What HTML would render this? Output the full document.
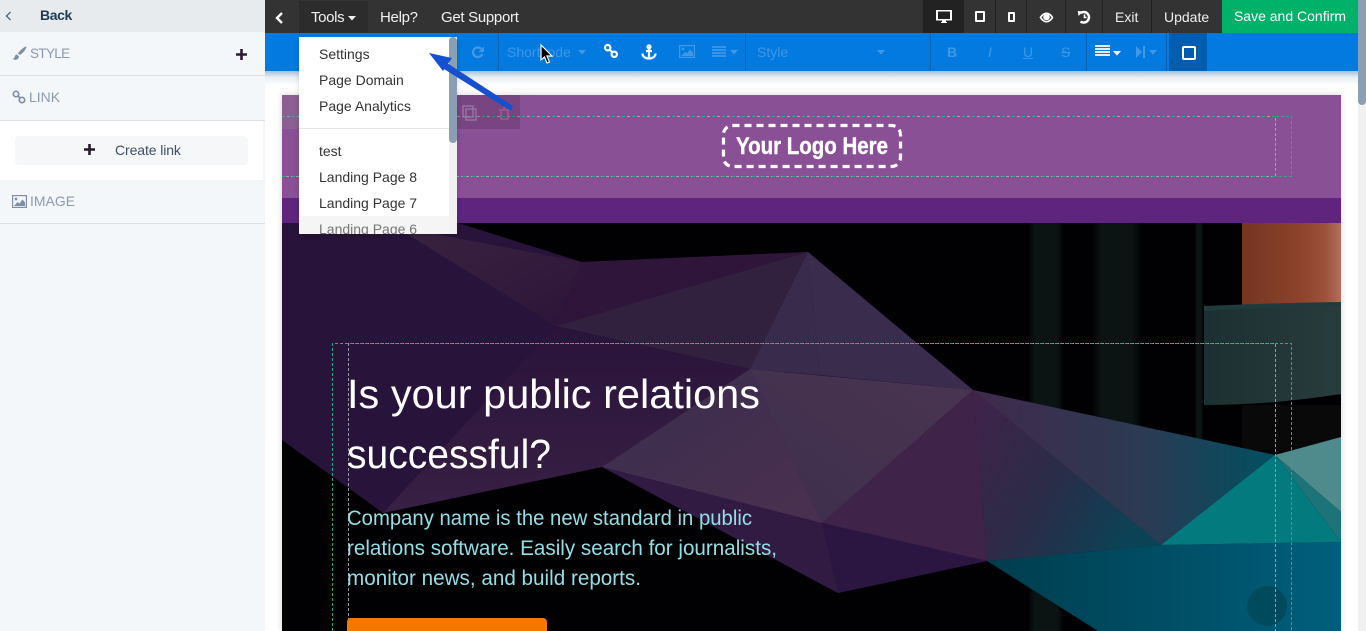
<!DOCTYPE html>
<html lang="en">
<head>
<meta charset="utf-8">
<title>Page Editor</title>
<style>
html,body{margin:0;padding:0;width:1366px;height:631px;overflow:hidden;background:#fff;font-family:"Liberation Sans",sans-serif}
.a{position:absolute;white-space:nowrap}
svg{position:absolute;overflow:visible}
.nav{color:#f0f0f0;font-size:15px;top:8px;line-height:18px}
.dd{color:#333;font-size:14px;left:20px;line-height:18px}
.sec{color:#8a9bb0;font-size:14px;line-height:18px}
.off{color:#3f97e4;font-size:14px;line-height:18px}
.div{position:absolute;top:33px;height:38px;width:1px;background:#0361b3}
.nd{position:absolute;top:0;height:33px;width:1px;background:#222}
</style>
</head>
<body>

<!-- Canvas -->
<div class="a" style="left:265px;top:71px;width:1093px;height:560px;background:#fff"></div>
<div class="a" style="left:265px;top:71px;width:1093px;height:14px;background:linear-gradient(#a9bfd6,#e8eef4 45%,#fff)"></div>
<div class="a" style="left:1358px;top:0;width:8px;height:631px;background:#f1f1f1"></div>
<div class="a" style="left:1358px;top:0;width:8px;height:105px;background:#8a9fb3;border-radius:0 0 4px 4px;z-index:30"></div>
<div class="a" style="left:282px;top:95px;width:1059px;height:536px;box-shadow:0 0 6px rgba(0,0,0,.18)"></div>

<svg style="left:0;top:0" width="1366" height="631" viewBox="0 0 1366 631">
  <defs>
    <linearGradient id="g1" x1="0" x2="1" y1="0" y2="0"><stop offset="0" stop-color="#402a4c"/><stop offset=".55" stop-color="#2c3a52"/><stop offset="1" stop-color="#014f62"/></linearGradient>
    <linearGradient id="g2" x1="0" x2="1" y1="0" y2=".5"><stop offset="0" stop-color="#41234a"/><stop offset=".55" stop-color="#2a2c48"/><stop offset="1" stop-color="#0c4255"/></linearGradient>
    <linearGradient id="g3" x1="0" x2="1" y1="0" y2="0"><stop offset="0" stop-color="#003d4e"/><stop offset="1" stop-color="#005f7c"/></linearGradient>
    <linearGradient id="g4" x1="0" x2="1" y1="0" y2="0"><stop offset="0" stop-color="#743522"/><stop offset=".6" stop-color="#8e432b"/><stop offset=".85" stop-color="#9c533c"/><stop offset="1" stop-color="#b0705e"/></linearGradient>
    <linearGradient id="g5" x1="0" x2="1" y1="0" y2="0"><stop offset="0" stop-color="#1b3031"/><stop offset="1" stop-color="#293c3c"/></linearGradient>
    <linearGradient id="s" x1="0" x2="1" y1="0" y2="0"><stop offset="0" stop-color="#0b1413" stop-opacity="0"/><stop offset=".2" stop-color="#0c1413"/><stop offset=".8" stop-color="#0c1413"/><stop offset="1" stop-color="#0b1413" stop-opacity="0"/></linearGradient>
    <linearGradient id="g6" x1="0" x2="0" y1="0" y2="1"><stop offset="0" stop-color="#2a133a"/><stop offset="1" stop-color="#382044"/></linearGradient>
    <linearGradient id="g7" x1="0" x2="1" y1="0" y2="1"><stop offset="0" stop-color="#3a2340"/><stop offset="1" stop-color="#2c1539"/></linearGradient>
    <linearGradient id="g8" x1="0" x2="1" y1="1" y2="0"><stop offset="0" stop-color="#3d2e4e"/><stop offset="1" stop-color="#4a3550"/></linearGradient>
    <linearGradient id="g9" x1="0" x2="1" y1="0" y2="1"><stop offset="0" stop-color="#3a2d4c"/><stop offset="1" stop-color="#4a3050"/></linearGradient>
  </defs>

  <rect x="282" y="95" width="1059" height="103" fill="#8a5096"/>
  <rect x="282" y="198" width="1059" height="25" fill="#5f247d"/>
  <rect x="282" y="223" width="1059" height="408" fill="#010103"/>

  <!-- photo -->
  <rect x="1242" y="223" width="99" height="82" fill="url(#g4)"/>
  <path d="M1204 309 Q1270 303 1341 303 V394 Q1270 405 1204 405Z" fill="url(#g5)"/>
  <path d="M1204 306 Q1270 303 1341 302 V306 Q1270 307 1204 311Z" fill="#1f3b3c"/>
  <rect x="1028" y="223" width="36" height="408" fill="url(#s)"/>
  <rect x="1092" y="223" width="50" height="408" fill="url(#s)"/>
  <rect x="1195" y="223" width="8" height="408" fill="url(#s)"/>
  <rect x="1242" y="405" width="99" height="45" fill="#0a0909"/>

  <!-- polygons -->
  <polygon points="282,223 458,223 582,262 808,252 973,390 1275,455 1161,545 987,561 838,593 602,467 383,513 282,440" fill="#28133a"/>
  <polygon points="394,226 582,262 556,326" fill="url(#g7)"/>
  <polygon points="582,262 808,252 556,326" fill="#2e1539"/>
  <polygon points="556,326 808,252 750,369" fill="#32203f"/>
  <polygon points="556,326 750,369 602,467 383,513" fill="url(#g6)"/>
  <polygon points="808,252 820,375 973,390" fill="#3a2c4d"/>
  <polygon points="808,252 750,369 820,375" fill="#392b4b"/>
  <polygon points="750,369 973,390 822,523" fill="url(#g8)"/>
  <polygon points="750,369 822,523 602,467" fill="url(#g9)"/>
  <polygon points="602,467 822,523 838,593" fill="#311b43"/>
  <polygon points="973,390 987,561 822,523" fill="#402348"/>
  <polygon points="822,523 987,561 838,593" fill="#2a1640"/>
  <polygon points="973,390 1275,455 1161,545" fill="url(#g1)"/>
  <polygon points="973,390 1161,545 987,561" fill="url(#g2)"/>
  <polygon points="987,561 1161,545 1341,542 1341,631 1098,631" fill="url(#g3)"/>
  <polygon points="1275,455 1161,545 1341,542" fill="#037a7e"/>
  <polygon points="1275,455 1341,437 1341,512" fill="#4f8a8c"/>
  <polygon points="1275,455 1341,512 1341,542" fill="#1d7478"/>
  <circle cx="1267" cy="606" r="20" fill="#004a5e"/>

  <!-- header dashed guides -->
  <path d="M282 116.500 H1275.500 V176.500 H282" fill="none" stroke="#a8a0ac" stroke-width="1" stroke-dasharray="3 2"/>
  <path d="M282 116.500 H1276 M282 176.500 H1276" fill="none" stroke="#35a57e" stroke-width="1" stroke-dasharray="3 7"/>
  <path d="M1276 116.500 H1291.500 V176.500 H1276" fill="none" stroke="#35a57e" stroke-width="1" stroke-dasharray="3 2"/>

  <!-- ghost toolbar -->
  <rect x="282" y="95" width="238" height="34" fill="#000" opacity=".13"/>
  <rect x="282" y="95" width="17" height="34" fill="#fff" opacity=".14"/>
  <g fill="none" stroke="#9a7aa6" stroke-width="1.300">
    <rect x="463" y="106" width="10" height="11"/><rect x="466" y="109" width="10" height="11"/>
  </g>
  <path d="M499 110 H510 M501 110 V119 H508 V110 M503 108 H506" fill="none" stroke="#a25a86" stroke-width="1.400"/>

  <!-- body dashed guides -->
  <path d="M348.500 631 V343.500 H1275.500 V631" fill="none" stroke="#9a9a9a" stroke-width="1" stroke-dasharray="3 2"/>
  <path d="M332.500 631 V343.500 H1291.500 V631" fill="none" stroke="#22ae7c" stroke-width="1" stroke-dasharray="3 2"/>

  <!-- logo -->
  <rect x="723.500" y="125.500" width="177" height="41" rx="9" fill="none" stroke="#fff" stroke-width="3.200" stroke-dasharray="7 5"/>
  <text x="736" y="154" font-family="Liberation Sans" font-weight="700" font-size="24" fill="#fff" stroke="#fff" stroke-width=".4" textLength="152" lengthAdjust="spacingAndGlyphs">Your Logo Here</text>

  <!-- hero text -->
  <text x="347" y="408" font-family="Liberation Sans" font-size="41" fill="#fff" textLength="413" lengthAdjust="spacingAndGlyphs">Is your public relations</text>
  <text x="347" y="468" font-family="Liberation Sans" font-size="41" fill="#fff" textLength="204" lengthAdjust="spacingAndGlyphs">successful?</text>
  <g font-family="Liberation Sans" font-size="21" fill="#93dfe6">
    <text x="347" y="525" textLength="405" lengthAdjust="spacingAndGlyphs">Company name is the new standard in public</text>
    <text x="347" y="555" textLength="430" lengthAdjust="spacingAndGlyphs">relations software. Easily search for journalists,</text>
    <text x="347" y="585" textLength="294" lengthAdjust="spacingAndGlyphs">monitor news, and build reports.</text>
  </g>
  <path d="M347 631 V622 a4 4 0 0 1 4-4 H543 a4 4 0 0 1 4 4 V631Z" fill="#f47800"/>
</svg>

<!-- Sidebar -->
<div class="a" style="left:0;top:0;width:265px;height:631px;background:#f4f7f9"></div>
<div class="a" style="left:0;top:0;width:265px;height:32px;background:#e7ebee"></div>
<svg style="left:5px;top:11px" width="7" height="10"><path d="M5.500 1 L1.500 5 L5.500 9" fill="none" stroke="#35506b" stroke-width="1.200"/></svg>
<div class="a" style="left:40px;top:6px;font-size:14px;line-height:18px;font-weight:700;color:#1f3a56;letter-spacing:-.4px">Back</div>

<svg style="left:12px;top:46px" width="15" height="15" viewBox="0 0 15 15"><path d="M14 .5 C11 1.500 7.500 5 6 7.500 L8 9 C10.500 7.500 13.500 4 14.500 1Z M5 8.500 C3 8.500 3 10.500 2.500 11.500 C2 12.500 1 12.500 .5 12.500 C2 14.500 6.500 14.500 7 10.500Z" fill="#7f8fa3"/></svg>
<div class="a sec" style="left:30px;top:45px;font-size:13.500px;letter-spacing:-.65px">STYLE</div>
<svg style="left:236px;top:49px" width="11" height="11"><path d="M5.500 0 V11 M0 5.500 H11" stroke="#2b1a33" stroke-width="2.600"/></svg>
<div class="a" style="left:0;top:75px;width:265px;height:1px;background:#dde0e2"></div>

<svg style="left:12px;top:90px" width="14" height="14" viewBox="0 0 14 14"><g fill="none" stroke="#7f8fa3" stroke-width="1.700"><circle cx="4" cy="4" r="2.700"/><circle cx="10" cy="10" r="2.700"/><path d="M5.500 5.500 L8.500 8.500"/></g></svg>
<div class="a sec" style="left:29px;top:88px">LINK</div>
<div class="a" style="left:0;top:120px;width:265px;height:1px;background:#dde0e2"></div>

<div class="a" style="left:0;top:121px;width:263px;height:59px;background:#fff"></div>
<div class="a" style="left:15px;top:136px;width:233px;height:29px;background:#f5f7f9;border-radius:4px"></div>
<svg style="left:84px;top:144px" width="11" height="11"><path d="M5.500 0 V11 M0 5.500 H11" stroke="#231a2b" stroke-width="2.600"/></svg>
<div class="a" style="left:115px;top:141px;font-size:14px;line-height:18px;color:#3d5068;letter-spacing:-.1px">Create link</div>

<svg style="left:12px;top:195px" width="15" height="13" viewBox="0 0 15 13"><rect x=".6" y=".6" width="13.800" height="11.800" fill="none" stroke="#7f8fa3" stroke-width="1.200"/><path d="M2 11 L5.500 7 L7.500 8.500 L10.500 4.500 L13 7.500 V11Z" fill="#7f8fa3"/><circle cx="4" cy="4" r="1.400" fill="#7f8fa3"/></svg>
<div class="a sec" style="left:30px;top:192px">IMAGE</div>
<div class="a" style="left:0;top:223px;width:265px;height:1px;background:#dde0e2"></div>

<!-- Blue toolbar -->
<div class="a" style="left:265px;top:33px;width:1093px;height:38px;background:#027ae0"></div>
<div class="div" style="left:498px"></div>
<div class="div" style="left:745px"></div>
<div class="div" style="left:930px"></div>
<div class="div" style="left:1086px"></div>
<div class="div" style="left:1166px"></div>
<div class="a" style="left:1169px;top:33px;width:38px;height:38px;background:#015dae"></div>

<svg style="left:471px;top:46px" width="14" height="13" viewBox="0 0 14 13"><path d="M10.300 3 A4.800 4.800 0 1 0 11.300 8" fill="none" stroke="#4198e6" stroke-width="2.200"/><path d="M13 .5 V6 H7.500Z" fill="#4198e6"/></svg>
<div class="a off" style="left:507px;top:43px">Shortcode</div>
<svg style="left:578px;top:50px" width="8" height="5"><path d="M0 0 H8 L4 4.500Z" fill="#4198e6"/></svg>

<svg style="left:604px;top:44px" width="14" height="14" viewBox="0 0 14 14"><g fill="none" stroke="#fff" stroke-width="2.200"><circle cx="3.700" cy="3.700" r="2.700"/><circle cx="10.300" cy="10.300" r="2.700"/><path d="M5.500 5.500 L8.500 8.500"/></g></svg>
<svg style="left:641px;top:44px" width="16" height="16" viewBox="0 0 16 16"><g fill="none" stroke="#fff" stroke-width="2.200"><circle cx="8" cy="2.800" r="1.500"/><path d="M8 4 V14.500 M5 7 H11 M1.500 9.500 C1.500 13 5 14.500 8 14.500 C11 14.500 14.500 13 14.500 9.500"/></g></svg>
<svg style="left:679px;top:45px" width="16" height="13" viewBox="0 0 16 13"><rect x=".6" y=".6" width="14.800" height="11.800" fill="none" stroke="#4198e6" stroke-width="1.200"/><path d="M2 11 L6 7 L8 8.500 L11 4.500 L14 7.500 V11Z" fill="#4198e6"/><circle cx="4" cy="4" r="1.400" fill="#4198e6"/></svg>
<svg style="left:712px;top:46px" width="26" height="12"><path d="M0 1 H14 M0 4 H14 M0 7 H14 M0 10 H14" stroke="#4198e6" stroke-width="1.800"/><path d="M18 4 H26 L22 8.500Z" fill="#4198e6"/></svg>

<div class="a off" style="left:757px;top:43px">Style</div>
<svg style="left:877px;top:50px" width="8" height="5"><path d="M0 0 H8 L4 4.500Z" fill="#4198e6"/></svg>

<div class="a off" style="left:947px;top:43px;font-weight:700;font-size:14px">B</div>
<div class="a off" style="left:988px;top:43px;font-style:italic;font-size:14px">I</div>
<div class="a off" style="left:1023px;top:43px;font-size:14px;text-decoration:underline">U</div>
<div class="a off" style="left:1061px;top:43px;font-size:14px;text-decoration:line-through">S</div>

<svg style="left:1095px;top:45px" width="26" height="12"><path d="M0 1 H15 M0 4 H15 M0 7 H15 M0 10 H15" stroke="#fff" stroke-width="1.800"/><path d="M18 6 H26 L22 10.500Z" fill="#fff"/></svg>
<svg style="left:1136px;top:46px" width="21" height="12"><path d="M0 0 L6 6 L0 12Z M7 0 H9 V12 H7Z" fill="#4198e6"/><path d="M13 4 H21 L17 8.500Z" fill="#4198e6"/></svg>
<div class="a" style="left:1182px;top:46px;width:10px;height:10px;border:2px solid #fff;border-radius:2px"></div>

<!-- Top nav -->
<div class="a" style="left:265px;top:0;width:1093px;height:33px;background:#333"></div>
<svg style="left:275px;top:12px" width="9" height="12"><path d="M7 1 L2 6 L7 11" fill="none" stroke="#fff" stroke-width="2.400"/></svg>
<div class="a" style="left:299px;top:1px;width:69px;height:32px;background:#2c2c2c"></div>
<div class="a nav" style="left:311px;letter-spacing:-.35px;top:9px">Tools</div>
<svg style="left:348px;top:16px" width="8" height="5"><path d="M0 0 H8 L4 4.500Z" fill="#f0f0f0"/></svg>
<div class="a nav" style="left:380px;letter-spacing:-.3px;top:9px">Help?</div>
<div class="a nav" style="left:441px;letter-spacing:-.3px;top:9px">Get Support</div>

<div class="a" style="left:923px;top:0;width:40px;height:33px;background:#222"></div>
<div class="nd" style="left:963px"></div>
<div class="nd" style="left:995px"></div>
<div class="nd" style="left:1026px"></div>
<div class="nd" style="left:1065px"></div>
<div class="nd" style="left:1102px"></div>
<div class="nd" style="left:1151px"></div>

<svg style="left:936px;top:10px" width="16" height="14" viewBox="0 0 16 14"><path d="M0 0 H16 V10.500 H0Z M2 1.500 V9 H14 V1.500Z" fill="#fff" fill-rule="evenodd"/><path d="M6 10.500 H10 V12 H11 V13 H5 V12 H6Z" fill="#fff"/></svg>
<div class="a" style="left:975px;top:11px;width:6px;height:7px;border:2px solid #fff;border-radius:1px"></div>
<div class="a" style="left:1008px;top:12px;width:3px;height:6px;border:2px solid #fff;border-radius:1px"></div>
<svg style="left:1039px;top:12px" width="15" height="11" viewBox="0 0 15 11"><path d="M.5 5.500 C3 1.500 5.500 .5 7.500 .5 C9.500 .5 12 1.500 14.500 5.500 C12 9.500 9.500 10.500 7.500 10.500 C5.500 10.500 3 9.500 .5 5.500Z" fill="#fff"/><path d="M2.500 5.500 C4 3.500 5 2.700 5.500 2.500 A3.300 3.300 0 1 0 9.500 2.500 C10 2.700 11 3.500 12.500 5.500 C10.500 8 9 9 7.500 9 C6 9 4.500 8 2.500 5.500Z" fill="#333"/><circle cx="7.500" cy="5.300" r="2.200" fill="#fff"/></svg>
<svg style="left:1077px;top:10px" width="14" height="14" viewBox="0 0 14 14"><path d="M3.500 3 A5.300 5.300 0 1 1 3.500 11.500" fill="none" stroke="#fff" stroke-width="2.500"/><path d="M.8 1 L6 1.500 L1.500 6Z" fill="#fff"/><path d="M7.500 4.500 V7.500 H9.500" fill="none" stroke="#fff" stroke-width="1.600"/></svg>

<div class="a nav" style="left:1115px;font-size:14px">Exit</div>
<div class="a nav" style="left:1164px;font-size:14px">Update</div>
<div class="a nav" style="left:1222px;top:0;width:136px;height:33px;line-height:33px;background:#00b16a;color:#fff;text-align:center;font-size:14px">Save and Confirm</div>

<!-- Dropdown -->
<div class="a" style="left:299px;top:37px;width:158px;height:197px;background:#fff;overflow:hidden;box-shadow:0 2px 5px rgba(0,0,0,.15)">
  <div class="a dd" style="top:8px">Settings</div>
  <div class="a dd" style="top:34px">Page Domain</div>
  <div class="a dd" style="top:60px">Page Analytics</div>
  <div class="a" style="left:0;top:91px;width:150px;height:1px;background:#e5e5e5"></div>
  <div class="a dd" style="top:105px">test</div>
  <div class="a dd" style="top:131px">Landing Page 8</div>
  <div class="a dd" style="top:157px">Landing Page 7</div>
  <div class="a" style="left:0;top:179px;width:150px;height:18px;background:#f5f5f5"></div>
  <div class="a dd" style="top:183px;color:#777">Landing Page 6</div>
  <div class="a" style="left:150px;top:0;width:8px;height:197px;background:#f1f1f1"></div>
  <div class="a" style="left:150px;top:0;width:8px;height:106px;background:#8a9fb3;border-radius:4px"></div>
</div>

<!-- Annotation arrow -->
<svg style="left:0;top:0;z-index:40" width="1366" height="631" viewBox="0 0 1366 631">
  <path d="M447 63 L513 106 L511 111 L444 69Z" fill="#1450cf"/>
  <path d="M429 53 L452 58 L443 71Z" fill="#1450cf"/>
  <path d="M541 45 V60 L544.500 57 L547 63 L549.500 62 L547 56 L552 56Z" fill="#000" stroke="#fff" stroke-width="1.200"/>
</svg>

</body>
</html>
